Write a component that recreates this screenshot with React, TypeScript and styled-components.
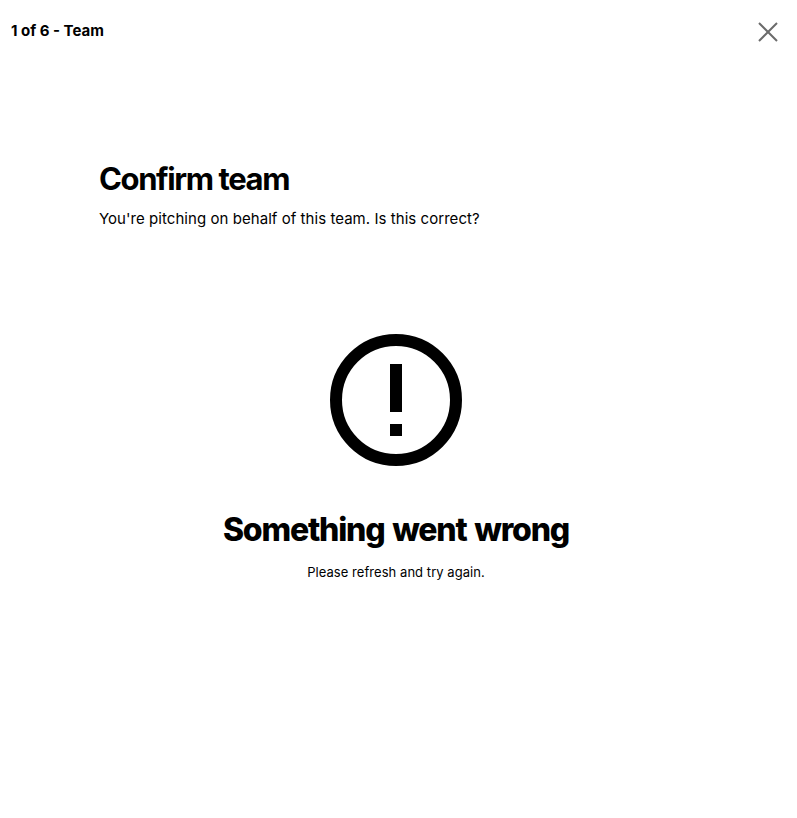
import React from "react";
import styled, { createGlobalStyle } from "styled-components";

const GlobalStyle = createGlobalStyle`
    html, body {
        margin: 0;
        padding: 0;
        background: #fff;
    }
    body {
        font-family: "Inter", "Liberation Sans", sans-serif;
        color: #000;
    }
`;

const Page = styled.div`
    width: 792px;
    height: 818px;
    display: flex;
    flex-direction: column;
    overflow: hidden;
`;

const Header = styled.header`
    display: flex;
    justify-content: space-between;
    align-items: flex-start;
    padding: 20px 12px 0 11px;
    height: 98px;
`;

const StepLabel = styled.div`
    margin-top: 1px;
    font-size: 15px;
    line-height: 20px;
    font-weight: 700;
`;

const CloseButton = styled.button`
    border: 0;
    background: none;
    padding: 0;
    width: 24px;
    height: 24px;
    display: flex;
    svg {
        display: block;
    }
`;

const Intro = styled.section`
    padding: 41px 99px 0;
`;

const Title = styled.h1`
    margin: 0;
    font-size: 31px;
    line-height: 40px;
    font-weight: 700;
    letter-spacing: -1.4px;
`;

const Subtitle = styled.p`
    margin: 8px 0 0;
    font-size: 15px;
    line-height: 24px;
    font-weight: 400;
    letter-spacing: 0.05px;
`;

const ErrorState = styled.section`
    display: flex;
    flex-direction: column;
    align-items: center;
    padding-top: 103px;
`;

const ErrorTitle = styled.h2`
    margin: 44px 0 0;
    font-size: 32px;
    line-height: 40px;
    font-weight: 800;
    letter-spacing: -1.2px;
    word-spacing: 2px;
`;

const ErrorText = styled.p`
    margin: 12px 0 0;
    font-size: 13px;
    line-height: 20px;
    font-weight: 400;
    letter-spacing: 0.05px;
`;

const App: React.FC = () => {
    return (
        <Page>
            <GlobalStyle />
            <Header>
                <StepLabel>1 of 6 - Team</StepLabel>
                <CloseButton aria-label="Close">
                    <svg width="24" height="24" viewBox="0 0 24 24">
                        <path d="M3 3l18 18M21 3L3 21" stroke="#6b6b6b" strokeWidth="2" fill="none" />
                    </svg>
                </CloseButton>
            </Header>
            <Intro>
                <Title>Confirm team</Title>
                <Subtitle>You're pitching on behalf of this team. Is this correct?</Subtitle>
            </Intro>
            <ErrorState>
                <svg width="132" height="132" viewBox="0 0 132 132">
                    <circle cx="66" cy="66" r="60" fill="none" stroke="#000" strokeWidth="12" />
                    <path d="M60 30h12v48H60zM60 90h12v12H60z" fill="#000" />
                </svg>
                <ErrorTitle>Something went wrong</ErrorTitle>
                <ErrorText>Please refresh and try again.</ErrorText>
            </ErrorState>
        </Page>
    );
};

export default App;
